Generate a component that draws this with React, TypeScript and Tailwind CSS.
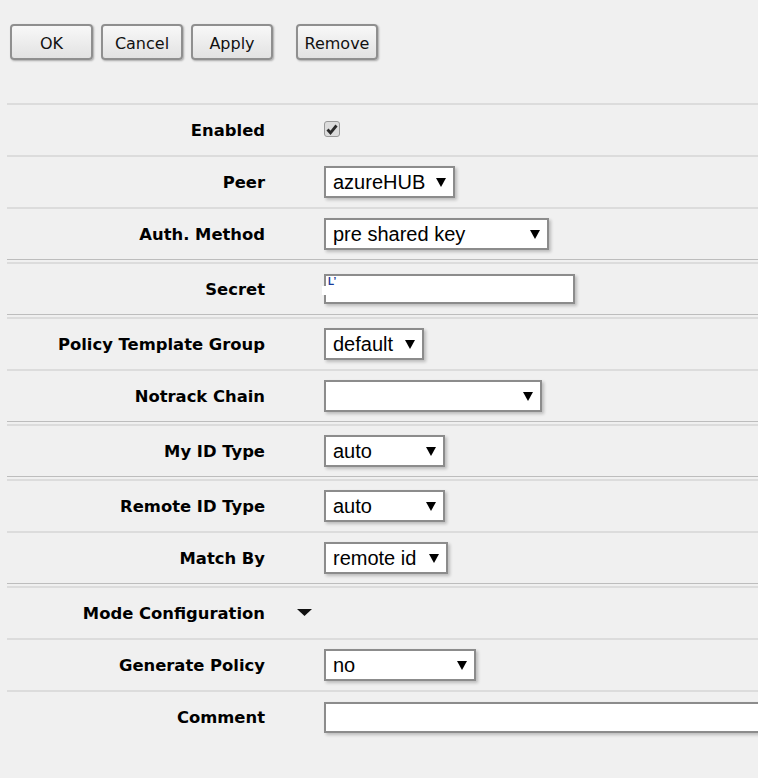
import React from 'react'

type Sep = 'single' | 'double'

const Arrow = () => (
  <svg width="10" height="9" viewBox="0 0 10 9" className="shrink-0">
    <polygon points="0,0 10,0 5,9" fill="#000" />
  </svg>
)

const Select = ({ value, width }: { value: string; width: string }) => (
  <div
    className={`${width} h-[32px] flex items-center justify-between bg-white border-2 border-[#8c8c8c] pl-[7px] pr-[7px] shadow-[2px_2px_3px_rgba(0,0,0,0.22)] text-[20px] text-black font-['Liberation_Sans',Arial,sans-serif]`}
  >
    <span className="leading-none">{value}</span>
    <Arrow />
  </div>
)

const Button = ({ label, width }: { label: string; width: string }) => (
  <button
    className={`${width} h-[36px] pt-[3px] rounded-[4px] border-2 border-[#8f8f8f] bg-linear-to-b from-[#f8f8f8] to-[#e2e2e2] shadow-[1px_1px_2px_rgba(0,0,0,0.3)] text-[16px] text-[#111] font-['DejaVu_Sans',Verdana,sans-serif]`}
  >
    {label}
  </button>
)

const Row = ({ sep, label, children }: { sep: Sep; label: string; children?: React.ReactNode }) => (
  <div>
    {sep === 'double' && <div className="h-px bg-[#bdbdbd] mb-[2px]" />}
    <div className="h-[2px] bg-[#dcdcdc]" />
    <div className="h-[50px] flex items-center">
      <div className="w-[258px] shrink-0 pt-[2px] text-right text-[16.4px] font-bold text-black font-['DejaVu_Sans',Verdana,sans-serif]">
        {label}
      </div>
      <div className="ml-[59px] shrink-0 flex items-center">{children}</div>
    </div>
  </div>
)

export default function App() {
  return (
    <div className="w-full min-h-[778px] bg-[#f0f0f0] overflow-hidden pt-[24px]">
      {/* toolbar */}
      <div className="flex pl-[10px]">
        <Button label="OK" width="w-[83px]" />
        <div className="ml-[8px]"><Button label="Cancel" width="w-[82px]" /></div>
        <div className="ml-[8px]"><Button label="Apply" width="w-[82px]" /></div>
        <div className="ml-[23px]"><Button label="Remove" width="w-[82px]" /></div>
      </div>

      {/* form */}
      <div className="ml-[7px] mt-[43px]">
        <Row sep="single" label="Enabled">
          <div className="w-[16px] h-[16px] mt-[-2px] rounded-[3px] border border-[#999] bg-[#dcdcdc] flex items-center justify-center">
            <svg width="12" height="11" viewBox="0 0 12 11">
              <path d="M1.5 5.5 L4.5 8.8 L10.5 1.5" stroke="#2a2a2a" strokeWidth="2.8" fill="none" />
            </svg>
          </div>
        </Row>
        <Row sep="single" label="Peer">
          <Select value="azureHUB" width="w-[131px]" />
        </Row>
        <Row sep="single" label="Auth. Method">
          <Select value="pre shared key" width="w-[225px]" />
        </Row>
        <Row sep="double" label="Secret">
          <div className="relative w-[251px] h-[30px] bg-white border-2 border-[#8c8c8c] shadow-[2px_2px_3px_rgba(0,0,0,0.22)]">
            <span className="absolute left-[2px] top-[1px] text-[10px] font-bold leading-none text-[#1a3a9a] font-['Liberation_Sans',Arial,sans-serif]">L&#8217;</span>
            <div className="absolute left-[-4px] top-[10px] w-[6px] h-[9px] bg-white" />
          </div>
        </Row>
        <Row sep="double" label="Policy Template Group">
          <Select value="default" width="w-[100px]" />
        </Row>
        <Row sep="single" label="Notrack Chain">
          <Select value="" width="w-[218px]" />
        </Row>
        <Row sep="double" label="My ID Type">
          <Select value="auto" width="w-[121px]" />
        </Row>
        <Row sep="double" label="Remote ID Type">
          <Select value="auto" width="w-[121px]" />
        </Row>
        <Row sep="single" label="Match By">
          <Select value="remote id" width="w-[124px]" />
        </Row>
        <Row sep="double" label="Mode Configuration">
          <svg width="15" height="7" viewBox="0 0 15 7" className="ml-[-27px] mt-[-2px]">
            <polygon points="0,0 15,0 7.5,7" fill="#111" />
          </svg>
        </Row>
        <Row sep="single" label="Generate Policy">
          <Select value="no" width="w-[152px]" />
        </Row>
        <Row sep="single" label="Comment">
          <div className="w-[460px] h-[31px] bg-white border-2 border-[#8c8c8c] shadow-[2px_2px_3px_rgba(0,0,0,0.22)]" />
        </Row>
      </div>
    </div>
  )
}
